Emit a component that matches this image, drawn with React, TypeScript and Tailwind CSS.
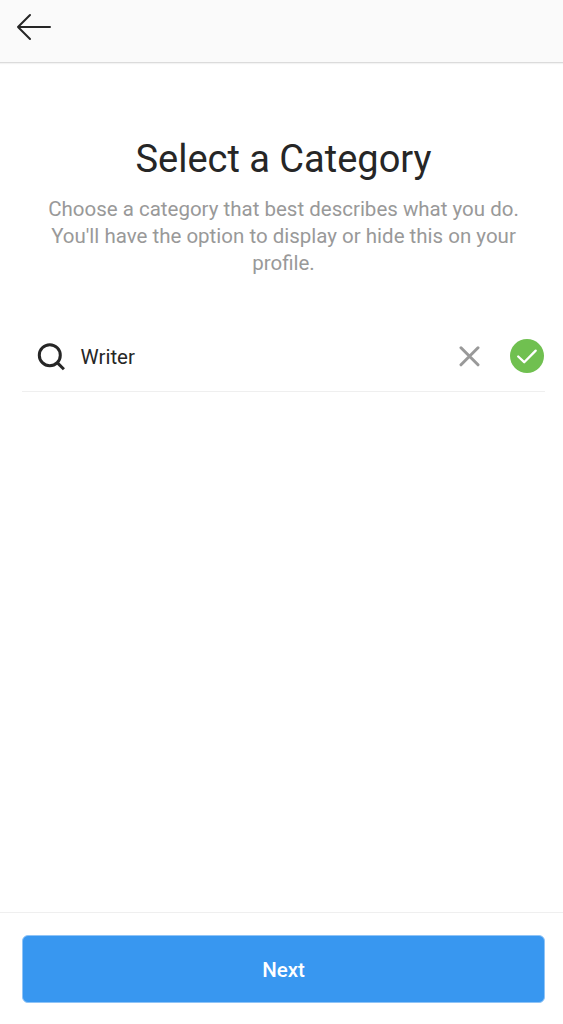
import React from 'react';

const BackIcon = () => (
  <svg
    width="36"
    height="28"
    viewBox="0 0 36 28"
    fill="none"
    stroke="#262626"
    strokeWidth="2"
    strokeLinecap="round"
    strokeLinejoin="round"
  >
    <path d="M34 14H2M14 2L2 14l12 12" />
  </svg>
);

const SearchIcon = () => (
  <svg width="30" height="30" viewBox="0 0 30 30" fill="none" stroke="#262626" strokeWidth="3">
    <circle cx="12.8" cy="13.2" r="10.5" />
    <path d="M20.2 20.6L26.9 27.3" />
  </svg>
);

const ClearIcon = () => (
  <svg width="22" height="22" viewBox="0 0 22 22" fill="none" stroke="#999999" strokeWidth="3" strokeLinecap="round">
    <path d="M2 2.8L19 19.8M19 2.8L2 19.8" />
  </svg>
);

const CheckIcon = () => (
  <svg width="34" height="34" viewBox="0 0 34 34" fill="none">
    <circle cx="17" cy="17" r="17" fill="#70c050" />
    <path
      d="M8.2 17.5l6 5.7L25.7 11.6"
      stroke="#fff"
      strokeWidth="2.3"
      strokeLinecap="round"
      strokeLinejoin="round"
    />
  </svg>
);

const App = () => {
  const [category, setCategory] = React.useState('Writer');

  return (
    <div className="flex h-screen w-full flex-col bg-white font-[Roboto,sans-serif] text-[#262626]">
      <header className="flex h-[63px] shrink-0 items-start border-b border-[#dbdbdb] bg-[#fafafa] pt-[13px] pl-4 shadow-[0_1px_1px_#f3f3f3]">
        <button aria-label="Back">
          <BackIcon />
        </button>
      </header>

      <main className="flex-1 pt-[72px] pr-[18px] pl-[22px]">
        <h1 className="text-center text-[38px] leading-[48px]">Select a Category</h1>
        <p className="mt-[13px] text-center text-[20.5px] leading-[27px] text-[#999999]">
          Choose a category that best describes what you do.
          <br />
          You'll have the option to display or hide this on your
          <br />
          profile.
        </p>

        <div className="mt-[45px] flex h-[70px] items-center border-b border-[#efefef] pr-px pl-[15px]">
          <SearchIcon />
          <span className="mt-[2px] ml-[13.5px] flex-1 text-[20.5px]">{category}</span>
          <button aria-label="Clear" className="mb-px" onClick={() => setCategory('')}>
            <ClearIcon />
          </button>
          <span className="mb-px ml-[29px]">
            <CheckIcon />
          </span>
        </div>
      </main>

      <footer className="h-[112px] shrink-0 border-t border-[#efefef] pt-[22px] pr-[18px] pl-[22px]">
        <button className="h-[68px] w-full rounded-[6px] border border-[#8fc4f7] bg-[#3897f0] pt-[2px] text-[20.5px] font-medium text-white">
          Next
        </button>
      </footer>
    </div>
  );
};

export default App;
